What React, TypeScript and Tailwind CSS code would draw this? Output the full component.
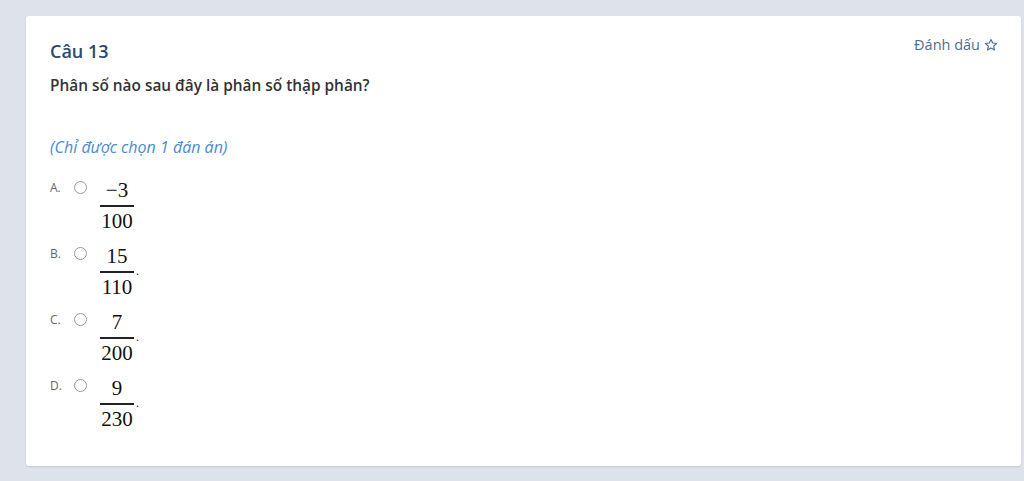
import React from 'react';

const options = [
  { label: 'A.', num: '−3', den: '100', dot: false },
  { label: 'B.', num: '15', den: '110', dot: true },
  { label: 'C.', num: '7', den: '200', dot: true },
  { label: 'D.', num: '9', den: '230', dot: true },
];

const Star = () => (
  <svg viewBox="0 0 24 24" className="w-[14px] h-[14px]" fill="none" stroke="currentColor" strokeWidth="2" strokeLinejoin="round">
    <path d="M12 2.5l2.9 6.1 6.6.8-4.9 4.6 1.3 6.6L12 17.3l-5.9 3.3 1.3-6.6-4.9-4.6 6.6-.8z" />
  </svg>
);

export default function App() {
  return (
    <div className="h-[481px] bg-[#dee2ea] pt-[16px] pl-[26px] pr-[3px] pb-[15px] font-['Open_Sans',sans-serif]">
      <div className="h-full bg-white rounded-[3px] shadow-[0_1px_2px_rgba(0,0,0,0.12)] flex flex-col pl-[24px] pr-[22px] pt-[22px]">
        <div className="flex items-start justify-between">
          <h2 className="text-[18px] leading-[26px] font-semibold text-[#2b4a6f]">Câu 13</h2>
          <button className="flex items-center gap-[4px] text-[14.5px] leading-[18px] text-[#4b6f96] mt-[-2px] mr-[1px]">
            Đánh dấu <Star />
          </button>
        </div>
        <p className="mt-[12px] text-[15.4px] leading-[20px] font-semibold text-[#333]">
          Phân số nào sau đây là phân số thập phân?
        </p>
        <p className="mt-[41px] text-[16px] leading-[20px] italic text-[#4a8bd0]">(Chỉ được chọn 1 đán án)</p>
        <div className="mt-[21px] flex flex-col gap-[11px]">
          {options.map((o) => (
            <div key={o.label} className="flex items-start">
              <span className="w-[24px] text-[12px] leading-[16px] text-[#666] mt-[2px]">{o.label}</span>
              <span className="mt-[3px] w-[13px] h-[13px] rounded-full border border-[#999] bg-white" />
              <div className="ml-[13px] flex items-center font-['Liberation_Serif',serif] text-[#111]">
                <div className="inline-flex flex-col items-center">
                  <span className="text-[21px] leading-[24px]">{o.num}</span>
                  <span className="w-[34px] border-t-2 border-[#222] mt-[3px]" />
                  <span className="text-[21px] leading-[24px] mt-[2px]">{o.den}</span>
                </div>
                {o.dot && <span className="text-[12px] ml-[2px] mt-[-2px]">.</span>}
              </div>
            </div>
          ))}
        </div>
      </div>
    </div>
  );
}
